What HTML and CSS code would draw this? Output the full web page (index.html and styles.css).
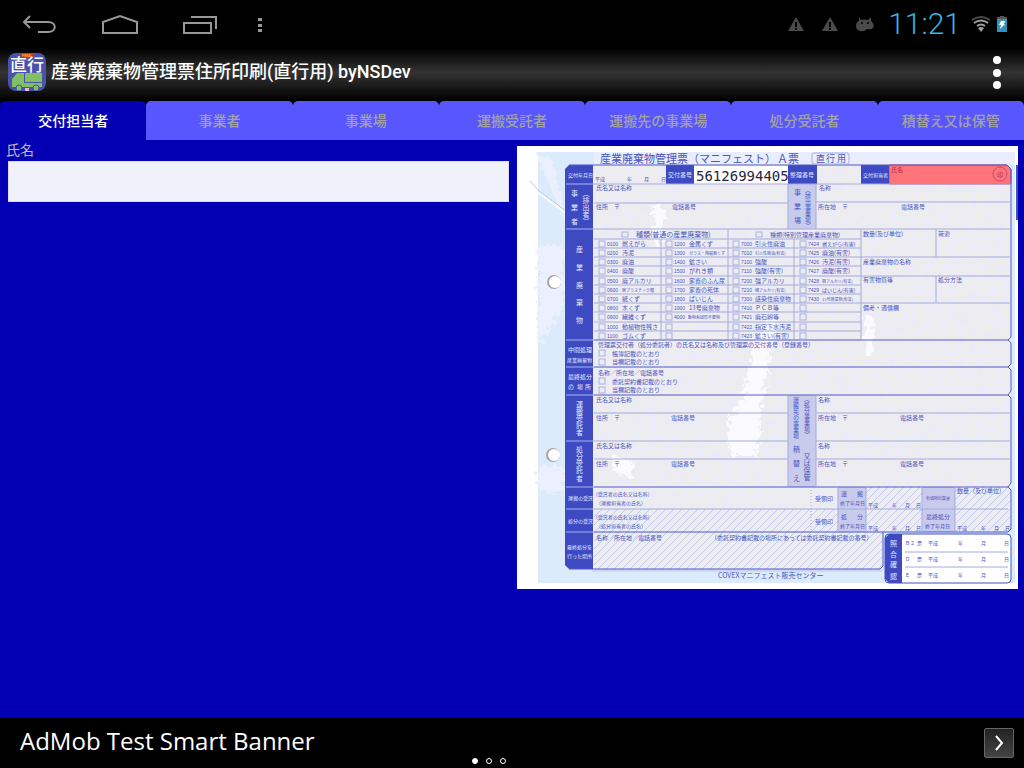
FILE: index.html
```
<!DOCTYPE html>
<html lang="ja">
<head>
    <meta charset="UTF-8">
    <meta name="viewport" content="width=device-width, initial-scale=1">
    <title>産業廃棄物管理票住所印刷(直行用) byNSDev</title>
    <link rel="stylesheet" href="styles.css">
</head>
<body>
    <div class="statusbar">
        <div class="nav">
            <button type="button" aria-label="戻る">
                <svg width="36" height="20" viewBox="0 0 36 20"><path d="M8 2 2 8l6 6M2 8h24c9 0 9 10 0 10H16"/></svg>
            </button>
            <button type="button" aria-label="ホーム">
                <svg width="38" height="20" viewBox="0 0 38 20"><path d="M2 19V8l17-6 17 6v11z"/></svg>
            </button>
            <button type="button" aria-label="履歴">
                <svg width="36" height="20" viewBox="0 0 36 20"><path d="M2 9h27v10H2zM9 3h25v12"/></svg>
            </button>
            <button type="button" class="narrow" aria-label="メニュー">
                <svg width="4" height="16" viewBox="0 0 4 16"><path class="fill" d="M0 2h4v3H0zM0 8h4v3H0zM0 13h4v3H0z"/></svg>
            </button>
        </div>
        <div class="status">
            <div class="notices">
                <svg width="16" height="16" viewBox="0 0 16 16"><path d="M8 1 16 15H0z"/><path class="mark" d="M8 6v5M8 12v2"/></svg>
                <svg width="16" height="16" viewBox="0 0 16 16"><path d="M8 1 16 15H0z"/><path class="mark" d="M8 6v5M8 12v2"/></svg>
                <svg width="18" height="16" viewBox="0 0 18 16"><path d="M3 1l2 3q4-1 7 0l3-3v4q4 3 2 7-2 2-6 1-3 3-7 2-4-1-4-5 0-4 3-5z"/><circle class="eye" cx="6" cy="7" r="1"/><circle class="eye" cx="12" cy="7" r="1"/></svg>
            </div>
            <span class="clock">11:21</span>
            <svg class="wifi" width="20" height="16" viewBox="0 0 20 16"><path class="dim" d="M1 4q9-6 18 0"/><path d="M3 7q7-5 14 0M6 10q4-3 8 0"/><path class="tip" d="M7 12q3-2 6 0l-3 4z"/></svg>
            <svg class="battery" width="10" height="16" viewBox="0 0 10 16"><path class="cap" d="M3 0h4v1h3v2H0V1h3z"/><path class="cell" d="M0 3h10v13H0z"/><path class="bolt" d="M4 5h4L7 8h1l-5 5 1-4H2z"/></svg>
        </div>
    </div>

    <header class="titlebar">
        <svg class="appicon" width="38" height="38" viewBox="0 0 38 38">
            <rect width="38" height="38" rx="8" fill="#4a52ae"/>
            <rect x="13" width="12" height="5" fill="#e02818"/>
            <text x="14" y="4" font-size="4" fill="#ffb030" font-weight="bold">FREE</text>
            <text x="2" y="18" font-size="17" font-weight="500" fill="#fff">直行</text>
            <path fill="#80bf62" d="M9 20h7v10h18v4H4v-8zM17 20h17v9H17z"/>
            <g fill="#80bf62" stroke="#4a52ae"><circle cx="11" cy="35" r="3"/><circle cx="28" cy="35" r="3"/></g>
            <path fill="#eab8d0" d="M17 35h4v3h-4z"/>
        </svg>
        <h1>産業廃棄物管理票住所印刷(直行用) byNSDev</h1>
        <button type="button" class="overflow" aria-label="その他">
            <svg width="10" height="34" viewBox="0 0 10 34"><circle cx="5" cy="5" r="4"/><circle cx="5" cy="18" r="4"/><circle cx="5" cy="30" r="4"/></svg>
        </button>
    </header>

    <nav class="tabs">
        <button type="button" class="active">交付担当者</button>
        <button type="button">事業者</button>
        <button type="button">事業場</button>
        <button type="button">運搬受託者</button>
        <button type="button">運搬先の事業場</button>
        <button type="button">処分受託者</button>
        <button type="button">積替え又は保管</button>
    </nav>

    <main>
        <div class="form-group">
            <label for="shimei">氏名</label>
            <input type="text" id="shimei">
        </div>

        <!-- 帳票プレビュー -->
        <div class="preview">
            <svg class="sheet" viewBox="0 0 501 443" role="img" aria-label="産業廃棄物管理票">
                <defs>
                    <pattern id="hatch" width="8" height="8" patternUnits="userSpaceOnUse">
                        <path d="M-2 10 10-2M-2 2 2-2M6 10 10 6" stroke="#c0c9ee" stroke-width="1"/>
                    </pattern>
                    <filter id="speckle" x="0" y="0" width="100%" height="100%">
                        <feTurbulence type="fractalNoise" baseFrequency="0.15" numOctaves="5" seed="7"/>
                        <feColorMatrix values="0 0 0 0 .82  0 0 0 0 .82  0 0 0 0 .95  0 9 0 0 -4.8"/>
                    </filter>
                    <filter id="rough" x="-20%" y="-5%" width="140%" height="110%">
                        <feTurbulence type="fractalNoise" baseFrequency="0.2" numOctaves="3" seed="3"/>
                        <feDisplacementMap in="SourceGraphic" scale="16"/>
                    </filter>
                    <g id="row" class="box">
                        <path class="line" d="M77 0H344"/>
                        <rect x="82" y="2" width="6" height="6"/>
                        <rect x="149" y="2" width="6" height="6"/>
                        <rect x="216" y="2" width="6" height="6"/>
                        <rect x="283" y="2" width="6" height="6"/>
                    </g>
                </defs>

                <rect width="501" height="443" fill="#fff"/>
                <rect x="21" y="6" width="477" height="431" fill="#dcebfc"/>
                <rect x="77" y="6" width="421" height="13" fill="#e9edfd"/>
                <path filter="url(#rough)" fill="#eceffd" d="M21 100h26v60l-26 40zM21 320h26v26H21zM21 10h12l14 46v20z"/>
                <path fill="none" stroke="#f4f8ff" stroke-width="3" d="M21 46l28 21"/>
                <path fill="none" stroke="#b8c8dc" d="M13 35l9 10 27 20"/>
                <path fill="#4050c8" d="M499 19h2v55h-2z"/>
                <path fill="#cfd8f3" d="M75 423h290v3H75z"/>

                <!-- 用紙 -->
                <path fill="#ededef" d="M52 19h438l4 4v363H366v37H52z"/>
                <rect x="77" y="19" width="417" height="367" filter="url(#speckle)"/>
                <path filter="url(#rough)" fill="#fbfbff" d="M238 194l14-24 8 4-14 76-6 60h-26l-4-30 16-30zM136 58l12 4v34l-12 6zM348 168l8 2v40h-8zM96 310l20 4v18l-20-6z"/>
                <path fill="url(#hatch)" d="M77 363h417v23H366v37H77zM349 341h56v22h-56zM438 341h56v22h-56z"/>
                <path fill="#c9cbed" d="M271 38h28v45h-28zM271 249h28v92h-28zM321 341h28v45h-28zM405 341h33v45h-33z"/>
                <path fill="#fff" d="M177 20h94v18h-94z"/>
                <path fill="#ff7478" stroke="#d94a68" d="M372 19h118l4 4v15H372z"/>
                <path fill="#3d4ac2" d="M52 19h24v404H52l-4-4V23zM149 19h28v19h-28zM271 19h29v19h-29zM344 19h28v19h-28z"/>
                <circle cx="37" cy="136" r="7" fill="#aaa39c"/>
                <circle cx="38" cy="136" r="6" fill="#fff"/>
                <circle cx="36" cy="309" r="7" fill="#aaa39c"/>
                <circle cx="37" cy="309" r="6" fill="#fff"/>

                <!-- 罫線 -->
                <path class="frame" d="M52 19h438l4 4v168l-3 3 3 3v21l-3 3 3 3v21l-3 4 3 3v85l-3 4 3 3v39l-3 3H366v34l-3 3H52"/>
                <path class="line strong" d="M77 194h414M77 221h414M77 249h414M77 341h414M77 386h289"/>
                <path class="line" d="M77 38h417M77 57h194M299 56h195M77 83h417M77 267h194M299 267h195M77 295h194M299 295h195M77 313h194M299 313h195M77 363h414"/>
                <path class="line" d="M271 38v45M299 38v45M144 93v101M211 83v111M277 93v101M344 83v111M419 83v28M419 130v27M344 111h150M344 130h150M344 157h150M271 249v92M299 249v92M321 341v45M349 341v45M405 341v45M438 341v45"/>
                <path class="line" stroke-dasharray="1 2" d="M294 341v45"/>
                <path stroke="#a9b4ee" d="M49 38h28M49 83h28M49 194h28M49 221h28M49 249h28M49 295h28M49 341h28M49 363h28M49 386h28"/>

                <!-- 表題 -->
                <text class="t11" x="83" y="17">産業廃棄物管理票（マニフェスト）</text>
                <text class="t11" x="260" y="17">Ａ票</text>
                <rect class="stroke" x="295" y="7" width="37" height="11" rx="2"/>
                <text class="t9" x="299 309 320" y="16">直行用</text>

                <g class="rev">
                    <text class="t5" x="51" y="31">交付年月日</text>
                    <text class="t6" x="151" y="31">交付番号</text>
                    <text class="t6" x="273" y="31">整理番号</text>
                    <text class="t5" x="346" y="31">交付担当者</text>
                    <text class="t7" x="54 54 54" y="50 64 78">事業者</text>
                    <text class="t7 vert" x="69" y="44">（排出者）</text>
                    <text class="t7" x="59 59 59 59 59" y="106 124 142 159 177">産業廃棄物</text>
                    <text class="t6" x="51" y="206">中間処理</text>
                    <text class="t5" x="50" y="216">産業廃棄物</text>
                    <text class="t6" x="51" y="233">最終処分</text>
                    <text class="t6" x="51 60 68" y="243">の場所</text>
                    <text class="t7" x="59 59 59 59 59" y="261 268 275 282 289">運搬受託者</text>
                    <text class="t7" x="59 59 59 59 59" y="306 313 320 327 335">処分受託者</text>
                    <text class="t5" x="51" y="354">運搬の受託</text>
                    <text class="t5" x="51" y="377">処分の受託</text>
                    <text class="t5" x="50" y="403">最終処分を</text>
                    <text class="t5" x="50" y="412">行った場所</text>
                </g>

                <text class="t5" x="78 83 110 127 144" y="35">平成年月日</text>
                <text class="number" x="179" y="35">56126994405</text>
                <text class="t6 onred" x="374" y="26">氏名</text>
                <circle cx="483" cy="28" r="7" fill="none" stroke="#d8486a"/>
                <text class="t6 onred" x="480" y="31">印</text>

                <text class="t6" x="79" y="44">氏名又は名称</text>
                <text class="t6" x="79" y="63">住所　〒</text>
                <text class="t6" x="155" y="63">電話番号</text>
                <text class="t7" x="277 277 277" y="49 63 77">事業場</text>
                <text class="t6 vert" x="291" y="41">（排出事業場）</text>
                <text class="t6" x="302" y="44">名称</text>
                <text class="t6" x="301" y="63">所在地　〒</text>
                <text class="t6" x="384" y="63">電話番号</text>

                <!-- 種類 -->
                <rect class="stroke" x="105" y="86" width="6" height="5"/>
                <text class="t7" x="119" y="91">種類(普通の産業廃棄物)</text>
                <rect class="stroke" x="239" y="86" width="6" height="5"/>
                <text class="t6" x="253" y="91">種類(特別管理産業廃棄物)</text>
                <use href="#row" y="93"/><use href="#row" y="102"/><use href="#row" y="111"/><use href="#row" y="120"/>
                <use href="#row" y="130"/><use href="#row" y="139"/><use href="#row" y="148"/><use href="#row" y="157"/>
                <use href="#row" y="166"/><use href="#row" y="176"/><use href="#row" y="185"/>
                <g class="codes">
                    <text y="100"><tspan x="90">0100</tspan><tspan x="157">1200</tspan><tspan x="224">7000</tspan><tspan x="291">7424</tspan></text>
                    <text y="109"><tspan x="90">0200</tspan><tspan x="157">1300</tspan><tspan x="224">7010</tspan><tspan x="291">7425</tspan></text>
                    <text y="118"><tspan x="90">0300</tspan><tspan x="157">1400</tspan><tspan x="224">7100</tspan><tspan x="291">7426</tspan></text>
                    <text y="127"><tspan x="90">0400</tspan><tspan x="157">1500</tspan><tspan x="224">7110</tspan><tspan x="291">7427</tspan></text>
                    <text y="137"><tspan x="90">0500</tspan><tspan x="157">1600</tspan><tspan x="224">7200</tspan><tspan x="291">7428</tspan></text>
                    <text y="146"><tspan x="90">0600</tspan><tspan x="157">1700</tspan><tspan x="224">7210</tspan><tspan x="291">7429</tspan></text>
                    <text y="155"><tspan x="90">0700</tspan><tspan x="157">1800</tspan><tspan x="224">7300</tspan><tspan x="291">7430</tspan></text>
                    <text y="164"><tspan x="90">0800</tspan><tspan x="157">1900</tspan><tspan x="224">7410</tspan></text>
                    <text y="173"><tspan x="90">0900</tspan><tspan x="157">4000</tspan><tspan x="224">7421</tspan></text>
                    <text y="183"><tspan x="90">1000</tspan><tspan x="224">7422</tspan></text>
                    <text y="192"><tspan x="90">1100</tspan><tspan x="224">7423</tspan></text>
                </g>
                <g class="t6">
                    <text y="100"><tspan x="105">燃えがら</tspan><tspan x="172">金属くず</tspan><tspan x="238">引火性廃油</tspan><tspan class="t5" x="305">燃えがら(有害)</tspan></text>
                    <text y="109"><tspan x="105">汚泥</tspan><tspan class="t4" x="172">ガラス・陶磁器くず</tspan><tspan class="t4" x="238">引火性廃油(有害)</tspan><tspan x="305">廃油(有害)</tspan></text>
                    <text y="118"><tspan x="105">廃油</tspan><tspan x="172">鉱さい</tspan><tspan x="238">強酸</tspan><tspan x="305">汚泥(有害)</tspan></text>
                    <text y="127"><tspan x="105">廃酸</tspan><tspan x="172">がれき類</tspan><tspan x="238">強酸(有害)</tspan><tspan x="305">廃酸(有害)</tspan></text>
                    <text y="137"><tspan x="105">廃アルカリ</tspan><tspan x="172">家畜のふん尿</tspan><tspan x="238">強アルカリ</tspan><tspan class="t4" x="305">廃アルカリ(有害)</tspan></text>
                    <text y="146"><tspan class="t4" x="105">廃プラスチック類</tspan><tspan x="172">家畜の死体</tspan><tspan class="t4" x="238">強アルカリ(有害)</tspan><tspan class="t5" x="305">ばいじん(有害)</tspan></text>
                    <text y="155"><tspan x="105">紙くず</tspan><tspan x="172">ばいじん</tspan><tspan x="238">感染性廃棄物</tspan><tspan class="t4" x="305">13号廃棄物(有害)</tspan></text>
                    <text y="164"><tspan x="105">木くず</tspan><tspan x="172">13号廃棄物</tspan><tspan x="238">ＰＣＢ等</tspan></text>
                    <text y="173"><tspan x="105">繊維くず</tspan><tspan class="t4" x="171">動物系固形不要物</tspan><tspan x="238">廃石綿等</tspan></text>
                    <text y="183"><tspan x="105">動植物性残さ</tspan><tspan x="238">指定下水汚泥</tspan></text>
                    <text y="192"><tspan x="105">ゴムくず</tspan><tspan x="238">鉱さい(有害)</tspan></text>
                </g>
                <text class="t6" x="346" y="90">数量(及び単位)</text>
                <text class="t6" x="421" y="90">荷姿</text>
                <text class="t6" x="346" y="118">産業廃棄物の名称</text>
                <text class="t6" x="346" y="136">有害物質等</text>
                <text class="t6" x="421" y="136">処分方法</text>
                <text class="t6" x="346" y="164">備考・通信欄</text>

                <!-- 中間処理・最終処分 -->
                <text class="t6" x="81" y="201">管理票交付者（処分委託者）の氏名又は名称及び管理票の交付番号（登録番号）</text>
                <rect class="stroke" x="82" y="204" width="6" height="6"/>
                <text class="t6" x="95" y="210">帳簿記載のとおり</text>
                <rect class="stroke" x="82" y="213" width="6" height="6"/>
                <text class="t6" x="95" y="218">当欄記載のとおり</text>
                <text class="t6" x="81" y="229">名称／所在地／電話番号</text>
                <rect class="stroke" x="82" y="232" width="6" height="6"/>
                <text class="t6" x="95" y="238">委託契約書記載のとおり</text>
                <rect class="stroke" x="82" y="241" width="6" height="6"/>
                <text class="t6" x="95" y="246">当欄記載のとおり</text>

                <!-- 運搬・処分受託者 -->
                <text class="t6" x="79" y="256">氏名又は名称</text>
                <text class="t6" x="79" y="274">住所　〒</text>
                <text class="t6" x="154" y="274">電話番号</text>
                <text class="t6 vert" x="279" y="251">運搬先の事業場</text>
                <text class="t6 vert" x="290" y="250">（処分事業場）</text>
                <text class="t6" x="301" y="256">名称</text>
                <text class="t6" x="301" y="274">所在地　〒</text>
                <text class="t6" x="383" y="274">電話番号</text>
                <text class="t6" x="79" y="302">氏名又は名称</text>
                <text class="t6" x="79" y="320">住所　〒</text>
                <text class="t6" x="154" y="320">電話番号</text>
                <text class="t7" x="276 276 276" y="306 320 335">積替え</text>
                <text class="t7 vert" x="290" y="307">又は保管</text>
                <text class="t6" x="301" y="302">名称</text>
                <text class="t6" x="301" y="320">所在地　〒</text>
                <text class="t6" x="383" y="320">電話番号</text>

                <!-- 受託欄 -->
                <text class="t5" x="79" y="350">(受託者の氏名又は名称)</text>
                <text class="t5" x="79" y="359">（運搬担当者の氏名）</text>
                <text class="t5" x="79" y="373">(受託者の氏名又は名称)</text>
                <text class="t5" x="79" y="382">（処分担当者の氏名）</text>
                <text class="t6" x="298" y="355">受領印</text>
                <text class="t6" x="298" y="378">受領印</text>
                <text class="t6" x="324 340" y="350">運搬</text>
                <text class="t5" x="323" y="359">終了年月日</text>
                <text class="t6" x="324 340" y="373">処分</text>
                <text class="t5" x="323" y="382">終了年月日</text>
                <text class="t5" x="351 356 375 388 399" y="361">平成年月日</text>
                <text class="t5" x="351 356 375 388 399" y="384">平成年月日</text>
                <text class="t4" x="409" y="354">有価物拾集量</text>
                <text class="t6" x="409" y="373">最終処分</text>
                <text class="t5" x="408" y="382">終了年月日</text>
                <text class="t6" x="440" y="347">数量（及び単位）</text>
                <text class="t5" x="440 445 464 477 488" y="384">平成年月日</text>
                <text class="t6" x="79" y="394">名称／所在地／電話番号</text>
                <text class="t6" x="194" y="394">（委託契約書記載の場所にあっては委託契約書記載の番号）</text>
                <text class="t7" x="201" y="432">COVEXマニフェスト販売センター</text>

                <!-- 照合確認 -->
                <rect x="368" y="388" width="126" height="49" rx="4" fill="#fff" stroke="#4552c4"/>
                <path fill="#3d4ac2" d="M385 388h-13l-4 4v41l4 4h13z"/>
                <path class="line" d="M388 406h103M388 421h103"/>
                <text class="t7 rev" x="373 373 373 373" y="400 411 421 433">照合確認</text>
                <text class="t5" x="388 394 400" y="399">Ｂ2票</text>
                <text class="t5" x="388 400" y="415">Ｄ票</text>
                <text class="t5" x="388 400" y="431">Ｅ票</text>
                <text class="t5" x="411 416 441 464 487" y="399">平成年月日</text>
                <text class="t5" x="411 416 441 464 487" y="415">平成年月日</text>
                <text class="t5" x="411 416 441 464 487" y="431">平成年月日</text>
            </svg>
        </div>
    </main>

    <footer class="banner">
        <a href="#">AdMob Test Smart Banner</a>
        <button type="button" aria-label="開く">
            <svg width="10" height="16" viewBox="0 0 10 16"><path d="M2 1l6 7-6 7"/></svg>
        </button>
        <div class="dots"><i class="on"></i><i></i><i></i></div>
    </footer>
</body>
</html>
```

FILE: styles.css
```
* {
    box-sizing: border-box;
}
body {
    margin: 0;
    min-height: 100vh;
    display: flex;
    flex-direction: column;
    background-color: #0300b3;
    color: #fff;
    font-family: Roboto, "Noto Sans CJK JP", sans-serif;
}
button {
    border: none;
    padding: 0;
    background: none;
    color: inherit;
    font-family: inherit;
    cursor: pointer;
}
svg {
    display: block;
}

/* status bar */
.statusbar {
    display: flex;
    justify-content: space-between;
    height: 48px;
    background-color: #000;
}
.nav {
    display: flex;
}
.nav button {
    width: 80px;
    display: flex;
    align-items: center;
    justify-content: center;
}
.nav .narrow {
    width: 40px;
}
.nav path {
    fill: none;
    stroke: #989898;
    stroke-width: 2;
}
.nav .fill {
    fill: #989898;
    stroke: none;
}
.status {
    display: flex;
    align-items: center;
    padding-right: 17px;
}
.notices {
    display: flex;
    gap: 18px;
    margin-right: 14px;
    fill: #4a4a4a;
}
.notices .mark {
    stroke: #000;
    stroke-width: 2;
}
.notices .eye {
    fill: #000;
}
.clock {
    margin-right: 10px;
    color: #33b5e5;
    font-size: 30px;
    font-weight: 300;
    line-height: 50px;
}
.wifi {
    margin-right: 6px;
    fill: none;
    stroke: #a0a0a0;
    stroke-width: 2;
}
.wifi .dim {
    stroke: #4a4a4a;
}
.wifi .tip {
    fill: #a0a0a0;
    stroke: none;
}
.battery .cap {
    fill: #555;
}
.battery .cell {
    fill: #2f93bb;
}
.battery .bolt {
    fill: #fff;
}

/* title bar */
.titlebar {
    display: flex;
    align-items: center;
    height: 53px;
    padding: 0 22px 5px 8px;
    background: linear-gradient(#000, #333 46%, #000);
}
.titlebar h1 {
    flex: 1;
    margin: 0 0 0 5px;
    font-size: 18px;
    font-weight: 500;
    line-height: 24px;
}
.overflow svg {
    fill: #fff;
}

/* tabs */
.tabs {
    display: flex;
    background-color: #000;
}
.tabs button {
    flex: 1;
    height: 39px;
    padding-bottom: 2px;
    border-radius: 5px 5px 0 0;
    background-color: #5856ff;
    color: #a3a3a3;
    font-size: 14px;
    font-weight: 500;
}
.tabs .active {
    background-color: #0300b3;
    color: #fff;
}

/* content */
main {
    flex: 1;
    display: grid;
    grid-template-columns: 1fr 1fr;
    align-items: start;
    gap: 8px;
    padding: 0 6px 8px 8px;
}
.form-group label {
    display: block;
    height: 21px;
    margin-left: -2px;
    color: #bebebe;
    font-size: 14px;
    line-height: 21px;
}
.form-group input {
    display: block;
    width: 100%;
    height: 41px;
    padding: 8px;
    border: 1px solid #dcdce8;
    background-color: #f1f1fb;
    font-size: 18px;
}
.preview {
    padding-top: 6px;
}
.sheet {
    width: 100%;
    height: auto;
    fill: #4a55c0;
    font-family: "Noto Sans CJK JP", sans-serif;
}
.sheet .line {
    fill: none;
    stroke: #a3aade;
}
.sheet .strong,
.sheet .frame {
    fill: none;
    stroke: #4f5ac6;
}
.sheet .stroke,
.sheet .box rect {
    fill: none;
    stroke: #a9b0e2;
}
.sheet .t11 {
    font-size: 11px;
}
.sheet .t9 {
    font-size: 9px;
}
.sheet .t7 {
    font-size: 7px;
}
.sheet .t6 {
    font-size: 6px;
}
.sheet .t5 {
    font-size: 5px;
}
.sheet .t4 {
    font-size: 4px;
}
.sheet .vert {
    writing-mode: vertical-rl;
}
.sheet .rev {
    fill: #e4e8ff;
}
.sheet .onred {
    fill: #b0285c;
}
.sheet .codes {
    font-family: "Liberation Sans", sans-serif;
    font-size: 5px;
}
.sheet .number {
    fill: #2a2438;
    font-family: "DejaVu Sans Mono", monospace;
    font-size: 14px;
}

/* ad banner */
.banner {
    position: relative;
    display: flex;
    align-items: center;
    justify-content: space-between;
    height: 50px;
    padding: 0 10px 0 20px;
    background-color: #000;
}
.banner a {
    padding-bottom: 4px;
    color: #fff;
    font-family: "Open Sans", sans-serif;
    font-size: 24px;
    line-height: 46px;
    text-decoration: none;
}
.banner button {
    display: flex;
    align-items: center;
    justify-content: center;
    width: 30px;
    height: 30px;
    border: 1px solid #666;
    border-radius: 2px;
    background: linear-gradient(#222, #444);
}
.banner button path {
    fill: none;
    stroke: #fff;
    stroke-width: 2;
}
.dots {
    position: absolute;
    left: 0;
    right: 46px;
    bottom: 4px;
    display: flex;
    justify-content: center;
    gap: 8px;
}
.dots i {
    width: 6px;
    height: 6px;
    border: 1px solid #fff;
    border-radius: 50%;
}
.dots .on {
    background-color: #fff;
}
```
